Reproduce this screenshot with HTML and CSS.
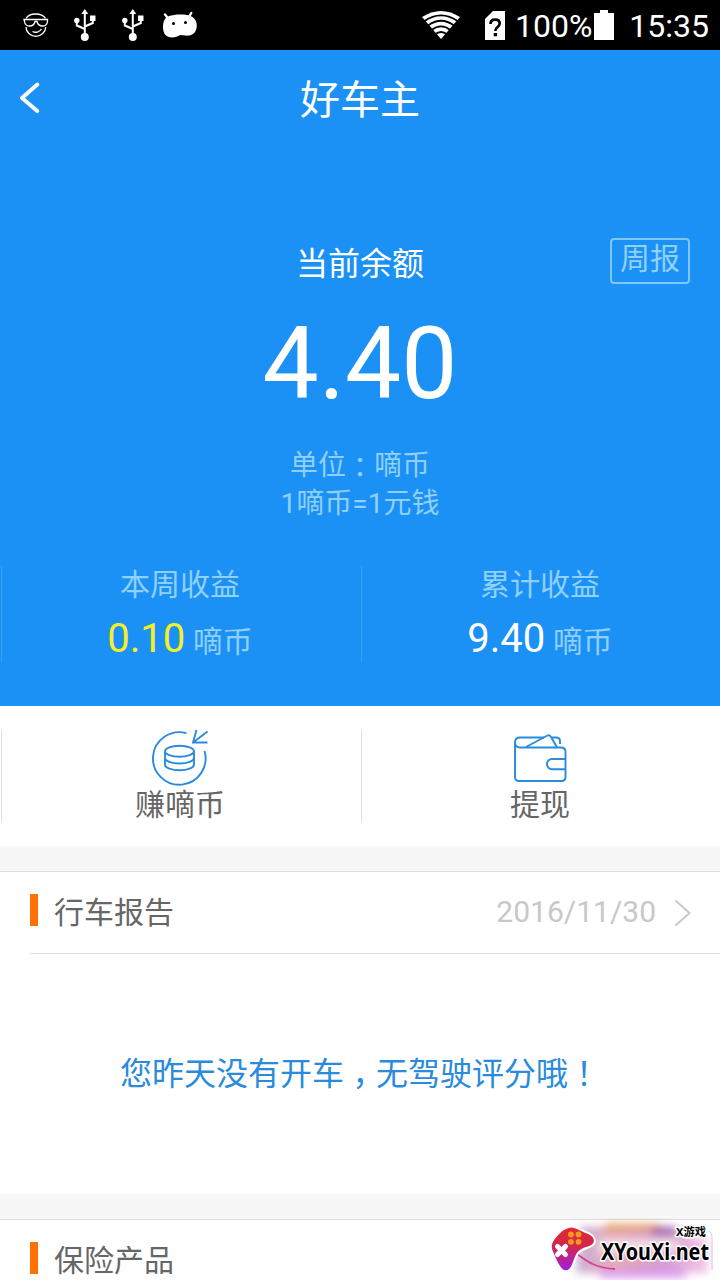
FILE: index.html
```
<!DOCTYPE html>
<html lang="zh-CN">
<head>
	<meta charset="utf-8">
	<title>好车主</title>
	<link rel="stylesheet" href="styles.css">
</head>
<body>

<div class="status-bar">
	<svg class="status-left" width="210" height="50" viewBox="0 0 210 50">
		<g fill="none" stroke="#fff" stroke-width="1.3">
			<path d="M26 18.5C28 15 32 14 35.500 14s8 1 10 4.500M26 27c0 5 4.500 9.300 9.800 9.300s9.900-4.300 9.900-9.300M32.500 31.500c3 1.500 7 .8 9-2.500"/>
			<path d="M24 19.500h23.500v2c-.5 3-2 4.500-4.500 4.500-3.500 0-5.500-2-6-4.500h-2c-.5 2.500-2.500 4.500-5.500 4.500-3 0-4.500-1.500-5-4.500z"/>
		</g>
		<g id="usb">
			<path d="M84.800 36V13M84.800 29l-8-3.500v-5M84.800 26.500l8-3.500v-5" fill="none" stroke="#fff" stroke-width="2"/>
			<path d="M84.800 9l3.500 5h-7zM90 15.500h5.500V21H90z" fill="#fff"/>
			<circle cx="76.800" cy="20.500" r="2.700" fill="#fff"/>
			<circle cx="84.800" cy="37" r="4" fill="#fff"/>
		</g>
		<use href="#usb" x="48"/>
		<path d="M167 17l-2-2.500M189.500 16l1.800-3" stroke="#fff" stroke-width="2.400" stroke-linecap="round"/>
		<path d="M163 27c0-6 2-9.500 6-11 3-1.100 7-1.600 11-1.600 5 0 9.500.5 12.500 2.500 3 2 4.300 5 4.300 8.700 0 5.500-3 9.500-8 10-3 .3-6-.3-8.500-.5-2.500 1.300-5 2.400-8.300 2.400-5.500 0-9-3.500-9-10.500z" fill="#fff"/>
		<circle cx="173.500" cy="23.500" r="1.500"/>
		<circle cx="185.500" cy="22.500" r="1.500"/>
	</svg>
	<div class="status-right">
		<svg class="icon-wifi" width="40" height="28" viewBox="0 0 40 28">
			<path d="M1 6Q20-6 39 6L20 28z" fill="#fff"/>
			<path d="M3 10.300Q20-1.500 37 10.300M7 14.500Q20 5 33 14.500M10.500 19Q20 11.800 29.500 19M14 23.300Q20 18.500 26 23.300" fill="none" stroke="#000" stroke-width="1.900"/>
		</svg>
		<svg class="icon-sim" width="20" height="29" viewBox="0 0 20 29">
			<path d="M8 0h12v29H0V8z" fill="#fff"/>
			<path d="M5.500 13c0-3 2-4.300 4.700-4.300 2.800 0 4.500 1.500 4.500 3.800 0 3.500-4.400 3.600-4.400 7.500" fill="none" stroke="#000" stroke-width="2.700"/>
			<path d="M8.700 22h3.300v3.300H8.700z"/>
		</svg>
		<span>100%</span>
		<svg class="icon-battery" width="20" height="30" viewBox="0 0 20 30">
			<path d="M6 0h8v3h6v27H0V3h6z" fill="#fff"/>
		</svg>
		<span>15:35</span>
	</div>
</div>

<div class="hero">
	<div class="title-bar">
		<svg class="back" width="20" height="32" viewBox="0 0 20 32">
			<path d="M17.300 2.500L2 16l15.300 13" fill="none" stroke="#fff" stroke-width="3.800" stroke-linecap="round" stroke-linejoin="round"/>
		</svg>
		<h1>好车主</h1>
	</div>
	<div class="balance">
		<div class="balance-label">当前余额</div>
		<div class="balance-value">4.40</div>
		<div class="balance-unit">单位<span class="punct colon" lang="zh-TW">：</span>嘀币<br>1嘀币=1元钱</div>
		<div class="weekly">周报</div>
	</div>
	<div class="earnings">
		<div class="col">
			<div class="earn-label">本周收益</div>
			<div class="earn-value"><b class="yellow">0.10</b> 嘀币</div>
		</div>
		<div class="col">
			<div class="earn-label">累计收益</div>
			<div class="earn-value"><b>9.40</b> 嘀币</div>
		</div>
	</div>
</div>

<div class="actions">
	<div class="col">
		<svg width="60" height="60" viewBox="150 729 60 60" fill="none" stroke="#2a8bdc" stroke-width="1.900">
			<path d="M186.500 734.200A26.300 26.300 0 1 0 204.500 752"/>
			<path d="M196.500 731l-3.500 12.500h14.500M193 743.500l14.500-11"/>
			<ellipse cx="179.500" cy="752.300" rx="14.500" ry="5.500"/>
			<path d="M165 752.300v13.500c0 3 6.500 5.500 14.500 5.500s14.500-2.500 14.500-5.500v-13.500M165 759c0 3 6.500 5.500 14.500 5.500s14.500-2.500 14.500-5.500"/>
		</svg>
		<span>赚嘀币</span>
	</div>
	<div class="col">
		<svg width="60" height="60" viewBox="510 728 60 60" fill="none" stroke="#2a8bdc" stroke-width="1.900">
			<path d="M515 742.300V777q0 4 4 4h42.500q4 0 4-4v-25q0-4.500-4.500-4.500h-41q-5 0-5-5t5-5h24"/>
			<path d="M526 747l21.500-11.500q2-1 3 .8l6.500 11M552 737.500h4q4 0 4 3.500v3M565.500 759H552a5 5 0 0 0 0 10.200h13.500"/>
		</svg>
		<span>提现</span>
	</div>
</div>

<div class="card">
	<div class="card-head">
		<h2>行车报告</h2>
		<span class="date">2016/11/30</span>
		<svg width="18" height="28" viewBox="0 0 18 28">
			<path d="M2.500 1.500L16.500 14 2.500 26.500" fill="none" stroke="#c8c8c8" stroke-width="2"/>
		</svg>
	</div>
	<div class="card-body">您昨天没有开车<span class="punct comma" lang="zh-TW">，</span>无驾驶评分哦<span class="punct" lang="zh-TW">！</span></div>
</div>

<div class="card">
	<div class="card-head">
		<h2>保险产品</h2>
	</div>
</div>

<svg class="watermark" width="190" height="62" viewBox="530 1218 190 62">
	<defs>
		<linearGradient id="pad" x1="0" y1="0" x2="0" y2="1">
			<stop offset="0" stop-color="#e02a2f"/>
			<stop offset=".45" stop-color="#d3264f"/>
			<stop offset="1" stop-color="#a01ee0"/>
		</linearGradient>
		<linearGradient id="haze" x1="0" y1="0" x2="1" y2="0">
			<stop offset="0" stop-color="#c9b0d8"/>
			<stop offset=".3" stop-color="#e5a9b5"/>
			<stop offset=".65" stop-color="#d59bd0"/>
			<stop offset="1" stop-color="#f3c5ea"/>
		</linearGradient>
		<filter id="soft" x="-20%" y="-40%" width="140%" height="180%"><feGaussianBlur stdDeviation="4"/></filter>
	</defs>
	<g filter="url(#soft)">
		<path d="M580 1227h90l38 14v32H576z" fill="url(#haze)"/>
		<path d="M605 1224h55v6h-55z" fill="#e5a050"/>
		<path d="M598 1239h80v15h-80z" fill="#f4dce6"/>
		<path d="M600 1270h85v8h-85z" fill="#dc9bf0"/>
		<path d="M652 1227h24v8h-24z" fill="#9c60a8"/>
	</g>
	<path d="M577 1254c12 9 20 14 38 15" fill="none" stroke="#d8428c" stroke-width="1.800"/>
	<path d="M569 1228c3-1.300 6 0 9 1.600 5 2.800 11 4 14 7 3.500 3.800 2 8-3 9.500-5 1.700-10.500 3.400-13 8.500-2 4-2.800 8-5 12-2 4.300-6.500 5-9.500 1.400-3.500-4.300-6-10.500-8.500-16.500-2.500-5.800-.8-9.500 3-14 3.500-4 7-8 13-9.500z" fill="url(#pad)" stroke="#fff" stroke-width="4" paint-order="stroke"/>
	<path d="M557.500 1246.500l8 8M565.500 1246.500l-8 8" stroke="#fff" stroke-width="5" stroke-linecap="round"/>
	<g fill="#f99a1c">
		<circle cx="571" cy="1234.500" r="2.900"/>
		<circle cx="578.500" cy="1234.500" r="2.900"/>
		<circle cx="571" cy="1241.800" r="2.900"/>
		<circle cx="578.500" cy="1241.800" r="2.900"/>
	</g>
	<path d="M708 1231q4 1 4 7v32" fill="none" stroke="#d8c8d8" stroke-width="1"/>
	<text class="wm-small" x="676" y="1236" textLength="30" lengthAdjust="spacingAndGlyphs">X游戏</text>
	<text class="wm-name" x="601" y="1260" textLength="108" lengthAdjust="spacingAndGlyphs">XYouXi.net</text>
</svg>

</body>
</html>
```
FILE: styles.css
```
* {
	box-sizing: border-box;
}
body {
	margin: 0;
	height: 1280px;
	overflow: hidden;
	position: relative;
	background: #f7f7f7;
	color: #666;
	font-family: Roboto, "Noto Sans CJK SC", sans-serif;
	font-size: 30px;
	line-height: 40px;
}
svg {
	display: block;
	flex: none;
}
h1, h2, b {
	margin: 0;
	font-weight: normal;
}
/* full-width punctuation centred in its cell */
.punct {
	font-family: "Noto Sans CJK TC", sans-serif;
	line-height: 0;
}
.colon {
	vertical-align: -3px;
}
.comma {
	vertical-align: -10px;
}
.status-bar {
	display: flex;
	justify-content: space-between;
	height: 50px;
	background: #000;
	color: #fff;
	font-size: 32px;
}
.status-right {
	display: flex;
	align-items: center;
	padding-right: 11px;
}
.status-right span {
	padding-top: 2px;
}
.icon-wifi {
	margin-right: 24px;
}
.icon-sim {
	margin-right: 10px;
}
.icon-battery {
	margin: 0 15px 0 2px;
}
.hero {
	height: 656px;
	background: #1c91f5;
	color: #fff;
}
.title-bar {
	display: grid;
	grid-template-columns: 20px 1fr 20px;
	align-items: center;
	height: 100px;
	padding: 0 20px;
}
.back {
	margin-top: -4px;
}
.title-bar h1 {
	padding-top: 2px;
	font-size: 40px;
	text-align: center;
}
.balance {
	position: relative;
	height: 416px;
	padding-top: 94px;
	text-align: center;
}
.balance-label {
	font-size: 32px;
}
.balance-value {
	padding-top: 20px;
	font-size: 100px;
	line-height: 120px;
}
.balance-unit {
	padding-top: 23px;
	color: #8fd0fc;
	font-size: 28px;
	line-height: 38px;
}
.weekly {
	position: absolute;
	top: 88px;
	right: 30px;
	width: 80px;
	height: 46px;
	border: 2px solid #7cc8fb;
	border-radius: 4px;
	color: #8fd0fc;
	line-height: 38px;
}
.earnings,
.actions {
	display: grid;
	grid-template-columns: 1fr 1fr;
	text-align: center;
}
.col {
	margin-left: 1px;
	padding-right: 2px;
	border-left: 1px solid #e3e3e3;
}
.earnings .col {
	height: 96px;
	border-color: #3a9ff7;
	color: #8fd0fc;
}
.earn-label {
	line-height: 38px;
}
.earn-value {
	padding-top: 15px;
}
.earn-value b {
	color: #fff;
	font-size: 40px;
}
.earn-value .yellow {
	color: #f6ee26;
}
.actions {
	height: 140px;
	padding-top: 24px;
	background: #fff;
}
.actions .col {
	display: flex;
	flex-direction: column;
	align-items: center;
	height: 92px;
}
.actions svg {
	margin-top: -2px;
}
.actions span {
	margin-top: -3px;
}
.card {
	margin-top: 25px;
	border-top: 1px solid #ddd;
	background: #fff;
}
.card-head {
	display: flex;
	align-items: center;
	height: 82px;
	margin-left: 30px;
	padding-right: 29px;
	border-bottom: 1px solid #ddd;
}
.card-head h2 {
	display: flex;
	align-items: center;
	flex: 1;
	font-size: 30px;
}
.card-head h2::before {
	content: '';
	width: 8px;
	height: 32px;
	margin: -5px 16px 0 0;
	background: #ff7200;
}
.date {
	margin-right: 17px;
	padding-bottom: 2px;
	color: #c8c8c8;
}
.card-body {
	height: 240px;
	color: #2a8bdc;
	font-size: 32px;
	line-height: 240px;
	text-align: center;
}
.watermark {
	position: absolute;
	right: 0;
	bottom: 0;
}
.watermark text {
	fill: #000;
	stroke: #fff;
	stroke-width: 3px;
	stroke-linejoin: round;
	paint-order: stroke;
	font-weight: bold;
}
.wm-small {
	font-family: "Noto Sans", "Noto Sans CJK SC", sans-serif;
	font-size: 11px;
}
.wm-name {
	font-family: "Noto Sans", "Open Sans", sans-serif;
	font-size: 24px;
}
```
